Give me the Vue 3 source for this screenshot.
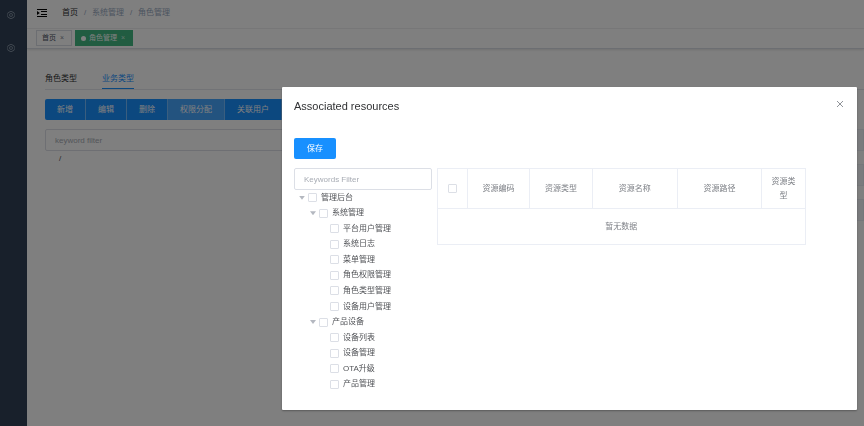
<script setup>
import { ref } from 'vue'

const filter = ref('')
const keyword = ref('')
const actions = ['新增', '编辑', '删除', '权限分配', '关联用户']
const columns = ['资源编码', '资源类型', '资源名称', '资源路径', '资源类型']
const tree = [
  { label: '管理后台', level: 0, open: true },
  { label: '系统管理', level: 1, open: true },
  { label: '平台用户管理', level: 2 },
  { label: '系统日志', level: 2 },
  { label: '菜单管理', level: 2 },
  { label: '角色权限管理', level: 2 },
  { label: '角色类型管理', level: 2 },
  { label: '设备用户管理', level: 2 },
  { label: '产品设备', level: 1, open: true },
  { label: '设备列表', level: 2 },
  { label: '设备管理', level: 2 },
  { label: 'OTA升级', level: 2 },
  { label: '产品管理', level: 2 },
]
</script>

<template>
  <div class="app">
    <nav class="sidebar" aria-label="Main">
      <a v-for="n in 2" :key="n" href="#" class="side-link" aria-label="Settings">
        <svg viewBox="0 0 16 16" width="8" height="8">
          <path d="M5.500 1h5l1 2h2l2 4v2l-2 4h-2l-1 2h-5l-1-2h-2l-2-4V7l2-4h2z" />
          <circle cx="8" cy="8" r="3" />
        </svg>
      </a>
    </nav>
    <div class="main">
      <header class="navbar">
        <button class="hamburger" aria-label="Toggle sidebar">
          <svg viewBox="0 0 10 10" width="10" height="10">
            <path d="M0 1.500h10M4 3.500h6M4 6.500h6M0 8.500h10" />
            <path class="solid" d="M0 3l2.800 2L0 7z" />
          </svg>
        </button>
        <div class="crumbs">
          <a href="#" class="home">首页</a><i>/</i><span>系统管理</span><i>/</i><span>角色管理</span>
        </div>
      </header>
      <div class="tags">
        <a href="#" class="tag">首页<b>×</b></a>
        <a href="#" class="tag active"><em></em>角色管理<b>×</b></a>
      </div>
      <section class="content">
        <div class="tabs">
          <a href="#">角色类型</a>
          <a href="#" class="current">业务类型</a>
        </div>
        <div class="columns">
          <div class="left">
            <div class="actions">
              <button v-for="(a, i) in actions" :key="a" :class="{ hover: i === 3 }">{{ a }}</button>
            </div>
            <input v-model="keyword" class="field" placeholder="keyword filter" aria-label="keyword filter" />
            <div class="root">/</div>
          </div>
          <div class="right">
            <div class="band"></div>
            <div class="band"></div>
            <div class="band"></div>
          </div>
        </div>
      </section>
    </div>

    <div class="mask">
      <div class="dialog" role="dialog" aria-labelledby="dialog-title">
        <div class="dialog-head">
          <h2 id="dialog-title">Associated resources</h2>
          <button class="close" aria-label="Close">
            <svg viewBox="0 0 8 8" width="8" height="8"><path d="M1 1l6 6M7 1L1 7" /></svg>
          </button>
        </div>
        <button class="save">保存</button>
        <div class="dialog-body">
          <div class="tree-pane">
            <input v-model="filter" class="field" placeholder="Keywords Filter" aria-label="Keywords Filter" />
            <ul class="tree">
              <li v-for="node in tree" :key="node.label" :class="'level-' + node.level">
                <span class="caret" :class="{ open: node.open }"></span>
                <label><input type="checkbox" />{{ node.label }}</label>
              </li>
            </ul>
          </div>
          <table>
            <colgroup>
              <col class="c-check" /><col class="c-code" /><col class="c-type" /><col class="c-name" /><col class="c-path" /><col class="c-last" />
            </colgroup>
            <thead>
              <tr>
                <th><input type="checkbox" aria-label="Select all" /></th>
                <th v-for="(c, i) in columns" :key="i">{{ c }}</th>
              </tr>
            </thead>
            <tbody>
              <tr><td colspan="6">暂无数据</td></tr>
            </tbody>
          </table>
        </div>
      </div>
    </div>
  </div>
</template>

<style>
body {
  background: #fff;
  overflow: hidden;
}
</style>

<style scoped>
* {
  box-sizing: border-box;
}
.app {
  display: flex;
  min-height: 100vh;
  font: 8px/12px "Liberation Sans", "Noto Sans CJK SC", sans-serif;
  color: #505256;
}
a {
  color: inherit;
  text-decoration: none;
}
button {
  font: inherit;
  border: 0;
  padding: 0;
  background: none;
}
svg {
  display: block;
  fill: none;
  stroke: currentColor;
}
.sidebar {
  width: 27px;
  flex: none;
  background: #304156;
  color: #bfcbd9;
  display: flex;
  flex-direction: column;
}
.side-link {
  height: 33px;
  padding: 11px 7px;
}
.main {
  flex: 1;
  min-width: 0;
}
.navbar {
  height: 29px;
  display: flex;
  align-items: center;
  gap: 15px;
  padding: 0 10px 2px;
  border-bottom: 1px solid #f0f1f2;
}
.hamburger {
  color: #000;
}
.hamburger .solid {
  fill: currentColor;
  stroke: none;
}
.crumbs {
  display: flex;
  color: #97a8be;
}
.crumbs .home {
  color: #303133;
}
.crumbs i {
  width: 14px;
  text-align: center;
  font-style: normal;
}
.tags {
  height: 20px;
  display: flex;
  align-items: flex-start;
  gap: 3px;
  padding: 1px 9px;
  border-bottom: 1px solid #d8dce5;
  box-shadow: 0 1px 2px rgba(0, 0, 0, 0.12);
}
.tag {
  height: 16px;
  display: flex;
  align-items: center;
  padding: 0 5px;
  border: 1px solid #d8dce5;
  color: #495060;
  font-size: 7px;
}
.tag b {
  width: 10px;
  padding-left: 4px;
  font-weight: 400;
  opacity: 0.7;
}
.tag em {
  width: 5px;
  height: 5px;
  border-radius: 50%;
  background: #fff;
  margin-right: 3px;
}
.tag.active {
  background: #42b983;
  border-color: #42b983;
  color: #fff;
}
.content {
  padding: 17px 0 0 18px;
}
.tabs {
  display: flex;
  gap: 25px;
  height: 24px;
  border-bottom: 1px solid #e4e7ed;
  line-height: 25px;
  color: #303133;
}
.tabs .current {
  color: #1890ff;
  border-bottom: 1px solid #1890ff;
}
.columns {
  display: flex;
  gap: 15px;
  padding-top: 9px;
}
.left {
  width: 30%;
  flex: none;
}
.actions {
  display: flex;
}
.actions button {
  flex: none;
  height: 21px;
  padding: 0 12px;
  background: #1890ff;
  color: #fff;
  border-right: 1px solid #74bcff;
}
.actions button:first-child {
  border-radius: 2px 0 0 2px;
}
.actions .hover {
  background: #46a6ff;
}
.field {
  display: block;
  width: 100%;
  height: 22px;
  border: 1px solid #dcdfe6;
  border-radius: 2px;
  background: #fff;
  padding: 0 9px;
  font: inherit;
  color: #606266;
  outline: 0;
}
.field::placeholder {
  color: #a8acb4;
}
.actions + .field {
  margin-top: 9px;
}
.root {
  padding: 2px 14px;
}
.right {
  flex: 1;
  display: grid;
  gap: 13px;
  align-content: start;
  padding-top: 30px;
}
.band {
  height: 22px;
  background: #f5f7fa;
  border: 1px solid #ebeef5;
}
.mask {
  position: fixed;
  inset: 0;
  background: rgba(0, 0, 0, 0.5);
  padding: 87px 7px 16px 282px;
}
.dialog {
  background: #fff;
  border-radius: 1px;
  box-shadow: 0 1px 2px rgba(0, 0, 0, 0.3);
  padding: 12px 12px 18px;
}
.dialog-head {
  display: flex;
  align-items: flex-start;
  justify-content: space-between;
  height: 39px;
}
h2 {
  margin: 0;
  font: 11px/15px "Liberation Sans", sans-serif;
  color: #303133;
}
.close {
  color: #909399;
  padding: 1px;
}
.save {
  display: block;
  width: 42px;
  height: 21px;
  border-radius: 2px;
  background: #1890ff;
  color: #fff;
}
.dialog-body {
  display: flex;
  align-items: flex-start;
  gap: 5px;
  padding-top: 9px;
}
.tree-pane {
  width: 25%;
  flex: none;
}
.tree {
  list-style: none;
  margin: 0;
  padding: 0;
  min-height: 202px;
  display: grid;
  grid-auto-rows: 1fr;
}
.tree li {
  display: flex;
  align-items: center;
  gap: 3px;
  padding-left: 5px;
}
.tree .level-1 {
  padding-left: 16px;
}
.tree .level-2 {
  padding-left: 27px;
}
.caret {
  width: 6px;
  height: 4px;
}
.caret.open {
  background: #b4b8c0;
  clip-path: polygon(0 0, 100% 0, 50% 100%);
}
label {
  display: flex;
  align-items: center;
  gap: 4px;
}
input[type="checkbox"] {
  appearance: none;
  display: block;
  width: 9px;
  height: 9px;
  margin: 0;
  border: 1px solid #dcdfe6;
  border-radius: 1px;
  background: #fff;
}
table {
  width: 67%;
  table-layout: fixed;
  border-collapse: collapse;
  text-align: center;
}
th,
td {
  border: 1px solid #ebeef5;
  padding: 0 8px;
}
th {
  height: 40px;
  font-weight: 400;
  line-height: 14px;
  color: #7c7f85;
}
th input[type="checkbox"] {
  margin: 0 auto;
}
td {
  height: 36px;
  color: #808389;
}
.c-check {
  width: 30px;
}
.c-code,
.c-type {
  width: 17%;
}
.c-name,
.c-path {
  width: 23%;
}
</style>
